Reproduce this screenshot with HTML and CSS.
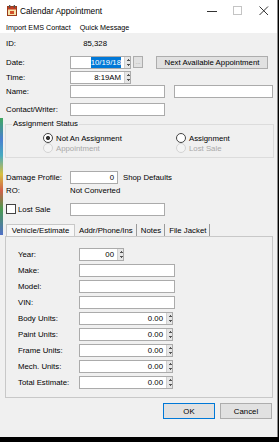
FILE: index.html
```html
<!DOCTYPE html>
<html lang="en">
<head>
  <meta charset="UTF-8" />
  <title>Calendar Appointment</title>
  <link rel="stylesheet" href="styles.css">
</head>
<body>
  <div class="window">
    <div class="titlebar">
      <svg class="app-icon" width="10" height="11" viewBox="0 0 10 11">
        <rect x="0.5" y="1.5" width="9" height="9" fill="#f6e2a8" stroke="#9a3a1a" />
        <rect x="1" y="2" width="8" height="2.5" fill="#c43b22" />
        <rect x="2" y="0" width="1.3" height="3" fill="#555" />
        <rect x="6.7" y="0" width="1.3" height="3" fill="#555" />
        <rect x="3" y="6" width="4" height="3" fill="#d2502a" />
      </svg>
      <span class="title">Calendar Appointment</span>
      <div class="controls">
        <span class="ctl"><svg width="10" height="10" viewBox="0 0 10 10"><line x1="0" y1="5.5" x2="10" y2="5.5" stroke="#333" /></svg></span>
        <span class="ctl"><svg width="10" height="10" viewBox="0 0 10 10"><rect x="0.5" y="0.5" width="8" height="8" fill="none" stroke="#c4c4c4" /></svg></span>
        <span class="ctl"><svg width="10" height="10" viewBox="0 0 10 10"><path d="M0.5 0.5 L9 9 M9 0.5 L0.5 9" stroke="#333" /></svg></span>
      </div>
    </div>

    <div class="menubar">
      <span>Import EMS Contact</span>
      <span>Quick Message</span>
    </div>

    <div class="dialog">
      <div class="row row-id">
        <span class="lbl">ID:</span>
        <span class="id-value">85,328</span>
      </div>

      <div class="row row-date">
        <span class="lbl">Date:</span>
        <div class="field spin w-date"><span class="val"><span class="sel">10/19/18</span></span><span class="spinner"></span></div>
        <button class="btn btn-dots">...</button>
        <button class="btn btn-next">Next Available Appointment</button>
      </div>

      <div class="row row-time">
        <span class="lbl">Time:</span>
        <div class="field spin w-date"><span class="val">8:19AM</span><span class="spinner"></span></div>
      </div>

      <div class="row row-name">
        <span class="lbl">Name:</span>
        <div class="field w-text"></div>
        <div class="field w-name2"></div>
      </div>

      <div class="row row-contact">
        <span class="lbl">Contact/Writer:</span>
        <div class="field w-text"></div>
      </div>

      <fieldset class="group">
        <legend>Assignment Status</legend>
        <div class="radios">
          <span class="radio checked">Not An Assignment</span>
          <span class="radio">Assignment</span>
          <span class="radio disabled">Appointment</span>
          <span class="radio disabled">Lost Sale</span>
        </div>
      </fieldset>

      <div class="row row-damage">
        <span class="lbl">Damage Profile:</span>
        <div class="field w-damage"><span class="val">0</span></div>
        <span class="after">Shop Defaults</span>
      </div>

      <div class="row row-ro">
        <span class="lbl">RO:</span>
        <span>Not Converted</span>
      </div>

      <div class="row row-lost">
        <span class="lbl"><span class="check"></span>Lost Sale</span>
        <div class="field w-text"></div>
      </div>

      <div class="tabs">
        <span class="tab active">Vehicle/Estimate</span>
        <span class="tab">Addr/Phone/Ins</span>
        <span class="tab">Notes</span>
        <span class="tab">File Jacket</span>
      </div>

      <div class="panel">
        <div class="vrow"><span class="vlbl">Year:</span><div class="field spin w-year"><span class="val">00</span><span class="spinner"></span></div></div>
        <div class="vrow"><span class="vlbl">Make:</span><div class="field w-make"></div></div>
        <div class="vrow"><span class="vlbl">Model:</span><div class="field w-make"></div></div>
        <div class="vrow"><span class="vlbl">VIN:</span><div class="field w-make"></div></div>
        <div class="vrow"><span class="vlbl">Body Units:</span><div class="field spin w-units"><span class="val">0.00</span><span class="spinner"></span></div></div>
        <div class="vrow"><span class="vlbl">Paint Units:</span><div class="field spin w-units"><span class="val">0.00</span><span class="spinner"></span></div></div>
        <div class="vrow"><span class="vlbl">Frame Units:</span><div class="field spin w-units"><span class="val">0.00</span><span class="spinner"></span></div></div>
        <div class="vrow"><span class="vlbl">Mech. Units:</span><div class="field spin w-units"><span class="val">0.00</span><span class="spinner"></span></div></div>
        <div class="vrow"><span class="vlbl">Total Estimate:</span><div class="field spin w-units"><span class="val">0.00</span><span class="spinner"></span></div></div>
      </div>

      <div class="actions">
        <button class="btn btn-ok">OK</button>
        <button class="btn btn-cancel">Cancel</button>
      </div>
    </div>
  </div>
</body>
</html>
```

FILE: styles.css
```css
* {
  box-sizing: border-box;
}

html, body {
  margin: 0;
}

body {
  width: 279px;
  height: 442px;
  overflow: hidden;
  background: #000;
  font-family: "Liberation Sans", Arial, sans-serif;
  font-size: 7.8px;
  color: #000;
}

.window {
  width: 278px;
  height: 437px;
  border-right: 1px solid #8a8a8a;
  background:
    linear-gradient(to bottom, #3fa860 0, #4a80d0 18%, #46aac0 32%, #d8c040 48%, #d06048 62%, #4a9a50 78%, #5070c8 100%) 0 118px / 3px 117px no-repeat,
    #f0f0f0;
}

.titlebar {
  height: 21px;
  background: #fff;
  display: flex;
  align-items: center;
  padding-left: 7px;
}

.app-icon {
  margin-right: 3px;
}

.title {
  font-size: 8.3px;
}

.controls {
  margin-left: auto;
  display: flex;
  align-self: stretch;
}

.ctl {
  width: 26px;
  display: flex;
  align-items: center;
  justify-content: center;
}

.menubar {
  height: 12px;
  background: #fff;
  display: flex;
  align-items: center;
  gap: 9px;
  padding-left: 6px;
  font-size: 7.2px;
}

.row {
  display: flex;
  align-items: center;
  height: 14px;
  padding-left: 6px;
}

.lbl {
  width: 64px;
  flex: none;
  display: flex;
  align-items: center;
}

.row-id { margin-top: 3px; }
.row-date { margin-top: 5px; }
.row-time { margin-top: 1px; }
.row-contact { margin-top: 4px; }
.row-damage { margin-top: 12px; }
.row-ro { height: 13px; }
.row-lost { margin-top: 5px; }

.id-value {
  width: 37px;
  text-align: right;
}

.field {
  height: 13px;
  background: #fff;
  border: 1px solid #ababab;
  display: flex;
  align-items: center;
  justify-content: flex-end;
  flex: none;
}

.field .val {
  padding-right: 3px;
  white-space: nowrap;
}

.sel {
  background: #0078d7;
  color: #fff;
  padding: 1px 0;
}

.spinner {
  width: 6px;
  height: 11px;
  background:
    linear-gradient(to bottom, #555, #555) 1.5px 3px / 3px 1px no-repeat,
    linear-gradient(to bottom, #555, #555) 2.5px 2px / 1px 1px no-repeat,
    linear-gradient(to bottom, #555, #555) 1.5px 7px / 3px 1px no-repeat,
    linear-gradient(to bottom, #555, #555) 2.5px 8px / 1px 1px no-repeat,
    #e6e6e6;
  border-left: 1px solid #d0d0d0;
}

.w-date { width: 61px; }
.w-text { width: 95px; }
.w-name2 { width: 99px; margin-left: 9px; }
.w-damage { width: 48px; }
.w-year { width: 45px; }
.w-make { width: 96px; }
.w-units { width: 94px; }

.btn {
  font-family: "Liberation Sans", Arial, sans-serif;
  font-size: 7.8px;
  background: #e1e1e1;
  border: 1px solid #adadad;
  color: #000;
  padding: 0;
  margin: 0;
}

.btn-dots {
  width: 10px;
  height: 12px;
  margin-left: 2px;
  color: #9a9a9a;
  font-size: 6px;
}

.btn-next {
  width: 112px;
  height: 13px;
  margin-left: 13px;
}

.after {
  margin-left: 5px;
}

.group {
  margin: 3px 3px 0 5px;
  padding: 0;
  border: 1px solid #dcdcdc;
}

.group legend {
  margin-left: 6px;
  padding: 0 1px;
  line-height: 10px;
}

.radios {
  display: grid;
  grid-template-columns: 133px 1fr;
  grid-auto-rows: 10px;
  padding: 4px 0 4px 37px;
}

.radio {
  display: flex;
  align-items: center;
}

.radio::before {
  content: "";
  width: 8px;
  height: 8px;
  margin-right: 3px;
  border: 1px solid #444;
  border-radius: 50%;
  background: #fff;
}

.radio.checked::before {
  background: radial-gradient(circle, #333 0 1.8px, #fff 2.3px);
}

.radio.disabled {
  color: #a8a8a8;
}

.radio.disabled::before {
  border-color: #d4d4d4;
  background: #f4f4f4;
}

.check {
  width: 10px;
  height: 10px;
  border: 1px solid #444;
  background: #fff;
  margin-right: 2px;
}

.tabs {
  display: flex;
  height: 12px;
  margin-top: 8px;
  padding-left: 6px;
}

.tab {
  display: flex;
  align-items: center;
  justify-content: center;
  padding: 0 3px;
  border-right: 1px solid #9a9a9a;
  margin-right: 1px;
}

.tab.active {
  width: 69px;
  border: 1px solid #c8c8c8;
  border-bottom: none;
  background: #f7f7f7;
}

.panel {
  height: 162px;
  margin: 0 4px 0 5px;
  border: 1px solid #c8c8c8;
  padding: 11px 0 0 12px;
  display: flex;
  flex-direction: column;
  gap: 3px;
}

.vrow {
  display: flex;
  align-items: center;
  height: 13px;
}

.vlbl {
  width: 61px;
  flex: none;
}

.actions {
  display: flex;
  justify-content: flex-end;
  gap: 5px;
  margin-top: 5px;
  padding-right: 5px;
}

.btn-ok, .btn-cancel {
  width: 52px;
  height: 16px;
}

.btn-ok {
  border-color: #0078d7;
}
```
